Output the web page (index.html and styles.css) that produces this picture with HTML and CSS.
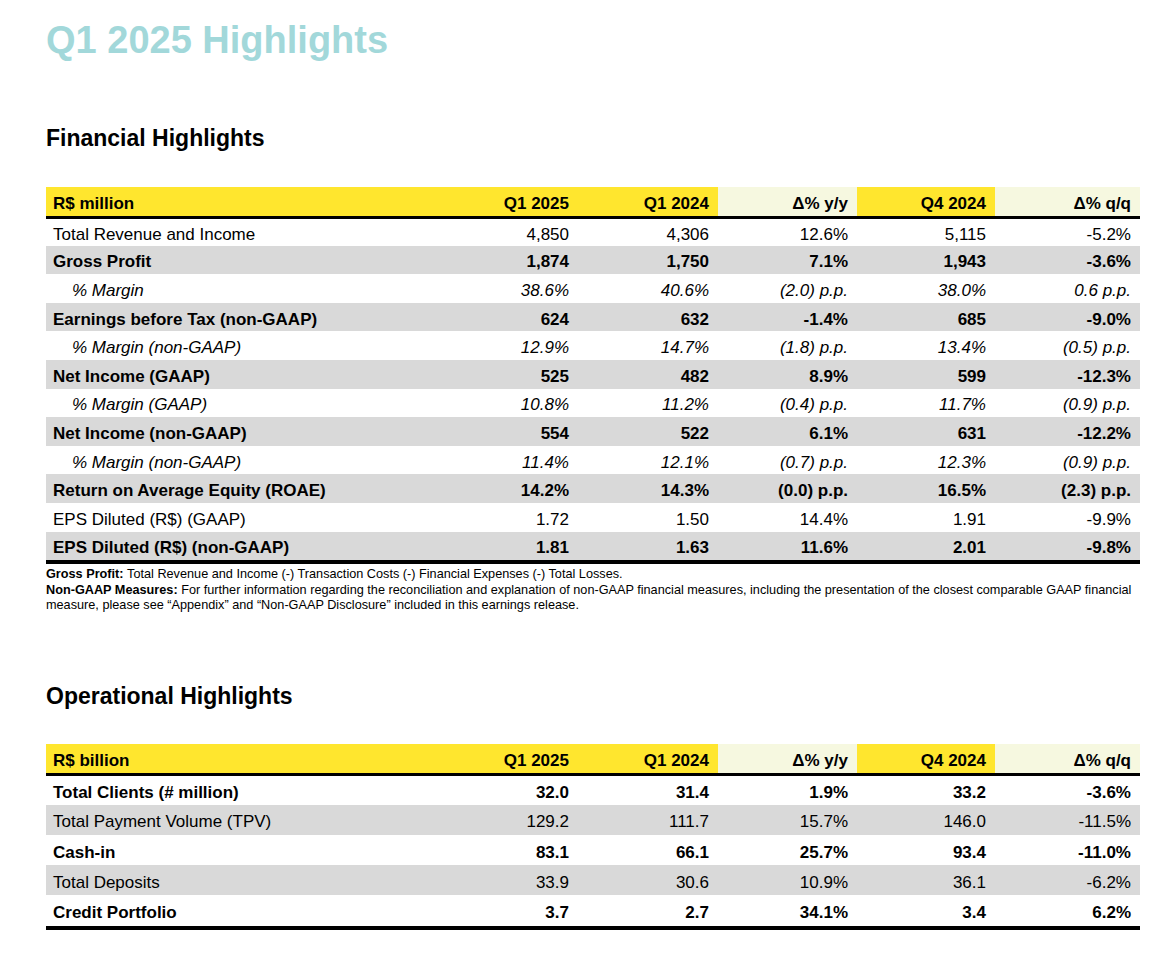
FILE: index.html
```html
<!DOCTYPE html>
<html lang="en">
<head>
<meta charset="utf-8">
<title>Q1 2025 Highlights</title>
<link rel="stylesheet" href="styles.css">
</head>
<body>
<div class="page">
  <h1 class="title">Q1 2025 Highlights</h1>

  <h2 class="section fin-heading">Financial Highlights</h2>
  <table class="data fin">
    <colgroup>
      <col class="c-label"><col class="c-v1"><col class="c-v2"><col class="c-v3"><col class="c-v4"><col class="c-v5">
    </colgroup>
    <thead>
      <tr>
        <th class="lbl y">R$ million</th>
        <th class="y">Q1 2025</th>
        <th class="y">Q1 2024</th>
        <th class="l">Δ% y/y</th>
        <th class="y">Q4 2024</th>
        <th class="l">Δ% q/q</th>
      </tr>
    </thead>
    <tbody>
      <tr><td class="lbl">Total Revenue and Income</td><td>4,850</td><td>4,306</td><td>12.6%</td><td>5,115</td><td>-5.2%</td></tr>
      <tr class="b g"><td class="lbl">Gross Profit</td><td>1,874</td><td>1,750</td><td>7.1%</td><td>1,943</td><td>-3.6%</td></tr>
      <tr class="i"><td class="lbl">% Margin</td><td>38.6%</td><td>40.6%</td><td>(2.0) p.p.</td><td>38.0%</td><td>0.6 p.p.</td></tr>
      <tr class="b g"><td class="lbl">Earnings before Tax (non-GAAP)</td><td>624</td><td>632</td><td>-1.4%</td><td>685</td><td>-9.0%</td></tr>
      <tr class="i"><td class="lbl">% Margin (non-GAAP)</td><td>12.9%</td><td>14.7%</td><td>(1.8) p.p.</td><td>13.4%</td><td>(0.5) p.p.</td></tr>
      <tr class="b g"><td class="lbl">Net Income (GAAP)</td><td>525</td><td>482</td><td>8.9%</td><td>599</td><td>-12.3%</td></tr>
      <tr class="i"><td class="lbl">% Margin (GAAP)</td><td>10.8%</td><td>11.2%</td><td>(0.4) p.p.</td><td>11.7%</td><td>(0.9) p.p.</td></tr>
      <tr class="b g"><td class="lbl">Net Income (non-GAAP)</td><td>554</td><td>522</td><td>6.1%</td><td>631</td><td>-12.2%</td></tr>
      <tr class="i"><td class="lbl">% Margin (non-GAAP)</td><td>11.4%</td><td>12.1%</td><td>(0.7) p.p.</td><td>12.3%</td><td>(0.9) p.p.</td></tr>
      <tr class="b g"><td class="lbl">Return on Average Equity (ROAE)</td><td>14.2%</td><td>14.3%</td><td>(0.0) p.p.</td><td>16.5%</td><td>(2.3) p.p.</td></tr>
      <tr><td class="lbl">EPS Diluted (R$) (GAAP)</td><td>1.72</td><td>1.50</td><td>14.4%</td><td>1.91</td><td>-9.9%</td></tr>
      <tr class="b g"><td class="lbl">EPS Diluted (R$) (non-GAAP)</td><td>1.81</td><td>1.63</td><td>11.6%</td><td>2.01</td><td>-9.8%</td></tr>
    </tbody>
  </table>
  <div class="notes">
    <p class="note"><strong>Gross Profit: </strong>Total Revenue and Income (-) Transaction Costs (-) Financial Expenses (-) Total Losses.</p>
    <p class="note"><strong>Non-GAAP Measures: </strong>For further information regarding the reconciliation and explanation of non-GAAP financial measures, including the presentation of the closest comparable GAAP financial measure, please see “Appendix” and “Non-GAAP Disclosure” included in this earnings release.</p>
  </div>

  <h2 class="section op-heading">Operational Highlights</h2>
  <table class="data op">
    <colgroup>
      <col class="c-label"><col class="c-v1"><col class="c-v2"><col class="c-v3"><col class="c-v4"><col class="c-v5">
    </colgroup>
    <thead>
      <tr>
        <th class="lbl y">R$ billion</th>
        <th class="y">Q1 2025</th>
        <th class="y">Q1 2024</th>
        <th class="l">Δ% y/y</th>
        <th class="y">Q4 2024</th>
        <th class="l">Δ% q/q</th>
      </tr>
    </thead>
    <tbody>
      <tr class="b"><td class="lbl">Total Clients (# million)</td><td>32.0</td><td>31.4</td><td>1.9%</td><td>33.2</td><td>-3.6%</td></tr>
      <tr class="g"><td class="lbl">Total Payment Volume (TPV)</td><td>129.2</td><td>111.7</td><td>15.7%</td><td>146.0</td><td>-11.5%</td></tr>
      <tr class="b"><td class="lbl">Cash-in</td><td>83.1</td><td>66.1</td><td>25.7%</td><td>93.4</td><td>-11.0%</td></tr>
      <tr class="g"><td class="lbl">Total Deposits</td><td>33.9</td><td>30.6</td><td>10.9%</td><td>36.1</td><td>-6.2%</td></tr>
      <tr class="b"><td class="lbl">Credit Portfolio</td><td>3.7</td><td>2.7</td><td>34.1%</td><td>3.4</td><td>6.2%</td></tr>
    </tbody>
  </table>
</div>
</body>
</html>
```

FILE: styles.css
```css
* { box-sizing: border-box; }

html, body {
  margin: 0;
  padding: 0;
  background: #ffffff;
}

body {
  font-family: "Liberation Sans", Arial, sans-serif;
  color: #000;
}

.page {
  padding: 18px 0 0 46px;
  width: 1140px;
}

.title {
  margin: 0;
  font-size: 38px;
  line-height: 44px;
  font-weight: bold;
  color: #a2d8da;
}

.section {
  margin: 0;
  font-size: 23px;
  line-height: 28px;
  font-weight: bold;
  color: #000;
}

.fin-heading { margin-top: 62px; }
.op-heading { margin-top: 68px; }

.data {
  width: 1094px;
  border-collapse: collapse;
  table-layout: fixed;
  font-size: 17px;
  line-height: 1;
}

.fin { margin-top: 35px; }
.op { margin-top: 34px; }

.c-label { width: 392px; }
.c-v1 { width: 140px; }
.c-v2 { width: 140px; }
.c-v3 { width: 139px; }
.c-v4 { width: 138px; }
.c-v5 { width: 145px; }

.data th,
.data td {
  padding: 4px 9px 0 0;
  text-align: right;
  vertical-align: middle;
  white-space: nowrap;
}

.data th {
  font-weight: bold;
  border-bottom: 3px solid #000;
}

.data th.y { background: #ffe62e; }
.data th.l { background: #f6f8e0; }

.fin th { height: 30px; }
.op th { height: 31px; }

.data .lbl {
  text-align: left;
  padding-left: 7px;
}

.fin td { height: 28.6px; }
.op td { height: 30.2px; }

.data tbody tr:last-child td {
  border-bottom: 4px solid #000;
}

.fin tbody tr:last-child td { height: 30.6px; }
.op tbody tr:last-child td { height: 32.4px; }

.data tr.g td { background: #d9d9d9; }
.data tr.b td { font-weight: bold; }
.data tr.i td { font-style: italic; }
.data tr.i td.lbl { padding-left: 26px; }

.notes {
  margin-top: 3px;
  width: 1094px;
  font-size: 12.7px;
  line-height: 15.5px;
}

.note { margin: 0; }
.note strong { font-weight: bold; }
```
